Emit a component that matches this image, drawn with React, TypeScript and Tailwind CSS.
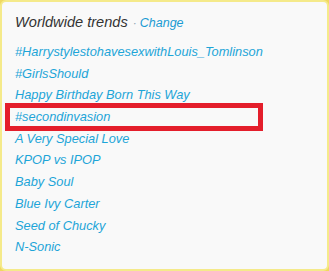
const trends = [
  '#HarrystylestohavesexwithLouis_Tomlinson',
  '#GirlsShould',
  'Happy Birthday Born This Way',
  '#secondinvasion',
  'A Very Special Love',
  'KPOP vs IPOP',
  'Baby Soul',
  'Blue Ivy Carter',
  'Seed of Chucky',
  'N-Sonic',
];

export default function App() {
  return (
    <div className="w-[329px] h-[271px] bg-[#f0d860] font-['Liberation_Sans',Arial,sans-serif] italic">
      <div className="h-full rounded-[6px] border-2 border-[#f5ea8a] bg-[#f9f9f9] px-[13px] pt-[10px]">
        <div className="flex items-baseline h-[28px]">
          <span className="text-[14.6px] text-[#333333]">Worldwide trends</span>
          <span className="ml-[5px] text-[12px] text-[#8fa5b0]">·</span>
          <span className="ml-[3px] text-[12.5px] text-[#1a9bd3]">Change</span>
        </div>
        <ul className="mt-[1px]">
          {trends.map((t, i) => (
            <li key={t} className="relative h-[21.7px] leading-[21.7px] text-[12.8px] text-[#1da5d8]">
              {i === 3 && (
                <div className="absolute left-[-10px] top-[-3px] w-[258px] h-[28px] border-[5px] border-[#e41e2b]" />
              )}
              {t}
            </li>
          ))}
        </ul>
      </div>
    </div>
  );
}
